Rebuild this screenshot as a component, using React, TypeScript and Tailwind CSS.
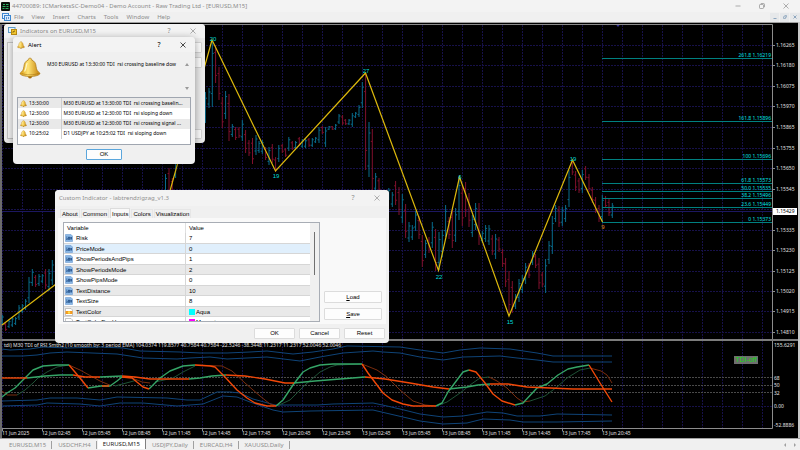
import type { ReactNode } from "react";
import clsx from "clsx";

type Bar = [number, number, number, 0 | 1];

// x, high, low, 1 = up bar
const bars: Bar[] = [
  [2.3, 315, 325, 1], [5.6, 323, 331, 0], [9, 320, 328, 1], [12.3, 317, 327, 1], [15.6, 317, 325, 1],
  [19, 305, 320, 1], [22.3, 304, 313, 1], [25.6, 299, 310, 1], [29, 277, 303, 1], [32.3, 269, 286, 1],
  [35.6, 275, 287, 0], [39, 274, 286, 1], [42.3, 274, 283, 1], [45.6, 269, 289, 0], [49, 269, 291, 1],
  [52.3, 260, 285, 1], [165.5, 174, 196, 1], [169, 168, 196, 0], [172.3, 178, 196, 0], [175.6, 163, 178, 1],
  [205.4, 92, 123, 1], [209, 88, 108, 1], [212.3, 40, 107, 1], [215.6, 45, 83, 0], [219, 67, 100, 0],
  [222.3, 97, 128, 0], [225.6, 91, 119, 1], [229, 94, 141, 0], [232.3, 124, 137, 1], [235.6, 127, 140, 0],
  [239, 127, 138, 0], [242.3, 120, 141, 1], [245.6, 130, 153, 0], [249, 140, 156, 0], [252.5, 138, 164, 0],
  [256, 135, 155, 1], [259, 141, 153, 1], [262.3, 140, 154, 1], [265.6, 147, 160, 0], [269, 147, 165, 1],
  [272.3, 144, 163, 0], [275.6, 157, 172, 0], [278.8, 145, 162, 1], [282.3, 144, 153, 0], [285.6, 148, 157, 0],
  [288.8, 137, 151, 1], [292.3, 141, 150, 0], [295.6, 141, 149, 1], [299.3, 137, 146, 0], [302.3, 139, 148, 1],
  [305.6, 139, 148, 1], [309, 138, 147, 0], [312.3, 138, 147, 1], [315.6, 137, 143, 1], [319, 127, 143, 1],
  [322.3, 126, 134, 0], [325.6, 127, 147, 1], [329, 126, 130, 1], [332.3, 126, 130, 0], [335.6, 124, 130, 1],
  [339, 114, 124, 1], [342.6, 115, 125, 0], [345.6, 119, 125, 0], [349, 119, 125, 1], [352.3, 113, 127, 1],
  [355.6, 112, 118, 1], [359, 105, 117, 1], [362.3, 82, 108, 1], [365.6, 72, 170, 0], [369, 122, 177, 1],
  [372.3, 129, 191, 0], [375.6, 173, 192, 1], [379, 178, 192, 0], [388.8, 188, 200, 1], [392.3, 192, 207, 1],
  [395.6, 181, 205, 0], [399, 187, 215, 0], [402.3, 194, 223, 1], [405.6, 204, 238, 0], [409, 222, 242, 1],
  [412.3, 225, 240, 1], [415.6, 211, 231, 1], [419, 216, 239, 0], [422.3, 235, 267, 0], [425.6, 240, 258, 1],
  [429, 237, 253, 0], [432.3, 222, 248, 1], [435.6, 229, 271, 0], [439, 232, 270, 1], [442.3, 230, 257, 1],
  [445.6, 205, 237, 1], [449, 217, 239, 0], [452.3, 210, 248, 0], [455.6, 208, 242, 1], [459, 177, 220, 1],
  [462.3, 185, 226, 0], [465.6, 182, 217, 0], [469, 193, 227, 0], [472.3, 215, 237, 1], [475.6, 203, 230, 1],
  [479, 203, 245, 0], [482.3, 231, 243, 1], [485.6, 225, 242, 1], [489, 225, 245, 1], [492.3, 235, 255, 0],
  [495.6, 234, 259, 1], [499, 237, 252, 0], [502.6, 249, 267, 0], [505.6, 258, 287, 0], [509, 271, 313, 0],
  [512.3, 281, 313, 0], [515.6, 294, 309, 1], [519, 279, 302, 1], [522.3, 275, 293, 1], [525.6, 263, 284, 1],
  [529, 263, 278, 0], [532.6, 251, 265, 1], [535.6, 254, 268, 0], [539, 258, 289, 0], [542.3, 272, 287, 0],
  [545.6, 259, 293, 1], [549, 241, 264, 1], [552.3, 216, 254, 1], [555.6, 205, 222, 1], [559, 206, 227, 0],
  [562.3, 207, 226, 1], [565.6, 205, 222, 1], [569, 170, 207, 1], [572.3, 160, 175, 0], [575.6, 171, 191, 0],
  [579, 178, 193, 0], [582.3, 170, 193, 1], [585.6, 166, 180, 0], [589, 174, 192, 0], [592.3, 187, 203, 0],
  [595.6, 197, 213, 0], [599, 205, 222, 0], [602.3, 195, 222, 1], [605.6, 196, 208, 0], [609, 199, 216, 0],
  [612.3, 203, 218, 1],
];

const zigzag = "2,325 130,228 158,234 212,40 275.5,171 365.5,73 438.5,270.5 459.5,177 509,316 572.5,160 602.5,222";

const pivots: [number, number, string][] = [
  [213, 41, "20"], [276, 178, "19"], [366, 73, "27"], [439, 279, "22"],
  [460, 179, "6"], [510, 324, "15"], [573, 161, "19"],
];

const prices: [number, string][] = [
  [45, "1.16265"], [65, "1.16180"], [86, "1.16075"], [106, "1.15970"], [127, "1.15865"],
  [148, "1.15755"], [168, "1.15650"], [189, "1.15545"], [209, ""], [230, "1.15335"],
  [250, "1.15230"], [271, "1.15125"], [291, "1.15020"], [311, "1.14915"], [332, "1.14810"],
];

const fibs: [number, string][] = [
  [58, "261.8 1.16219"], [121, "161.8 1.15896"], [159, "100 1.15696"], [183, "61.8 1.15573"],
  [191, "50.0 1.15535"], [198, "38.2 1.15496"], [207, "23.6 1.15449"], [222, "0 1.15373"],
];

const levels: [number, string][] = [
  [345, "155.6291"], [378, "68"], [385, "50"], [393, "32"], [406, "0.00"], [425, "-52.8886"],
];

const times = [
  "11 Jun 2025", "12 Jun 02:45", "12 Jun 05:45", "12 Jun 08:45", "12 Jun 11:45", "12 Jun 14:45",
  "12 Jun 17:45", "12 Jun 20:45", "12 Jun 23:45", "13 Jun 02:45", "13 Jun 05:45", "13 Jun 08:45",
  "13 Jun 11:45", "13 Jun 14:45", "13 Jun 17:45", "13 Jun 20:45",
];

const bands = [
  "2,349 10,350 30,349 43,347 67,348 100,347 123,348 140,351 180,352 200,353 227,353 250,352 267,351 293,354 313,352 333,349 347,346 400,347 420,350 443,353 460,350 480,348 510,349 537,353 553,356 612,356",
  "2,356 23,356 37,355 50,353 67,352 117,354 143,358 177,359 190,358 210,357 227,359 267,357 300,361 320,357 343,353 373,351 383,352 400,353 420,357 443,360 463,357 500,356 517,358 537,360 553,362 612,362",
  "2,401 37,400 50,398 77,398 100,400 117,397 167,398 187,400 200,400 217,392 230,392 240,393 253,399 275,405 317,405 333,404 373,403 387,406 400,409 420,414 443,417 463,416 487,412 503,413 517,416 540,416 557,414 612,415",
  "2,406 37,405 47,403 80,404 100,406 120,403 143,403 177,406 203,404 223,396 237,397 250,402 273,410 283,412 310,411 373,410 390,414 403,417 420,421 443,424 467,423 483,419 510,420 523,422 557,422 612,421",
];

const fastUp = [
  "2,397 7,393 15,388 25,378 33,370 43,366 57,365 69,365",
  "88,388 101,386 110,386 117,381 122,377",
  "149,389 160,378 170,371 183,366 195,365",
  "276,406 283,400 293,385 303,372 310,368 320,365 333,364 362,364",
  "436,406 442,403 448,392 457,380 463,372 469,370",
  "515,405 523,403 537,388 547,384 558,375 568,369 577,367 589,365",
  "27,378 45,376 60,375 73,375",
  "100,377 122,376",
  "189,379 200,378 212,376 226,375",
  "294,383 315,381 340,379 365,377",
  "449,389 467,387 478,385 490,384",
];

const fastDown = [
  "69,365 80,378 88,388",
  "102,386 109,386",
  "122,377 132,378 143,387 149,389",
  "195,365 210,366 215,367 225,377 237,390 247,398 255,403 267,406 276,406",
  "362,364 368,373 377,385 383,393 392,400 403,404 413,406 436,406",
  "469,370 476,372 485,383 493,394 502,401 515,405",
  "589,365 600,383 612,402",
  "2,378 27,378",
  "73,375 85,377 100,377",
  "122,376 135,377 150,379 189,379",
  "226,375 245,376 265,379 285,383 294,383",
  "365,377 385,379 410,383 433,387 449,389",
  "490,384 508,384 527,387 550,388 573,389 612,389",
];

const signalUp = [
  "17,395 25,390 33,383 38,378 47,372 57,367 69,365",
  "115,386 130,382 137,380",
  "155,382 173,378 183,372 195,366",
  "277,406 290,400 305,385 320,372 330,367 337,365 362,364",
  "436,406 447,402 460,393 470,385 480,378 489,377",
  "530,401 545,396 557,387 567,378 580,370 590,368",
];

const signalDown = [
  "2,391 7,395 17,395",
  "69,365 80,370 100,381 112,386",
  "132,378 142,382 150,383",
  "195,365 222,366 232,371 245,383 260,396 270,404 277,406",
  "362,364 377,370 387,377 400,390 413,401 425,405 436,406",
  "489,377 497,381 507,388 517,398 523,402 530,401",
  "590,368 601,371 607,375 612,383",
];

const alerts = [
  ["13:30:00", "M30 EURUSD at 13:30:00 TDI  rsi crossing baselin..."],
  ["12:30:00", "M30 EURUSD at 12:30:00 TDI  rsi sloping down"],
  ["12:30:00", "M30 EURUSD at 12:30:00 TDI  rsi crossing signal ..."],
  ["10:25:02", "D1 USDJPY at 10:25:02 TDI  rsi sloping down"],
];

const inputs = [
  ["Risk", "7"],
  ["PriceMode", "0"],
  ["ShowPeriodsAndPips", "1"],
  ["ShowPeriodsMode", "2"],
  ["ShowPipsMode", "0"],
  ["TextDistance", "10"],
  ["TextSize", "8"],
  ["TextColor", "Aqua"],
  ["TextColorDevUp", "Magenta"],
];

const swatches: Record<string, string> = { Aqua: "bg-[#00ffff]", Magenta: "bg-[#ff00ff]" };

function Bell({ className }: { className?: string }) {
  return (
    <svg viewBox="0 0 22 22" className={className} aria-hidden="true">
      <defs>
        <linearGradient id="bell" x1="0" x2="1">
          <stop offset="0" stopColor="#d99a12" />
          <stop offset="0.4" stopColor="#ffe475" />
          <stop offset="1" stopColor="#c47f08" />
        </linearGradient>
      </defs>
      <circle cx="11" cy="19.5" r="2" fill="#a86c08" />
      <path
        d="M11 1.2c-1.3 0-1.9.8-1.7 1.9C6.4 4 5.200 6.500 4.900 9.500 4.600 13 3.200 14.500 1 16.300c0 1.900 5 3.200 10 3.200s10-1.300 10-3.200c-2.200-1.800-3.600-3.300-3.900-6.800-.3-3-1.500-5.500-4.400-6.400.2-1.100-.4-1.900-1.700-1.900z"
        fill="url(#bell)"
        stroke="#a87412"
        strokeWidth="0.7"
      />
      <path d="M2.500 16.300c4 2 13 2 17 0" fill="none" stroke="#a87412" strokeWidth="0.6" />
      <path d="M8 6.500c-1 2-.7 5-2.200 7.500" fill="none" stroke="#fff6c4" strokeWidth="1.300" strokeLinecap="round" />
    </svg>
  );
}

function CloseIcon() {
  return (
    <svg viewBox="0 0 6 6" className="size-[6px]" stroke="currentColor" strokeWidth="0.7" aria-hidden="true">
      <path d="M0.500 0.500l5 5M5.500 0.500l-5 5" />
    </svg>
  );
}

function WindowTitle({ icon, title, className }: { icon?: ReactNode; title: string; className?: string }) {
  return (
    <header className={clsx("flex items-center gap-[3px] rounded-t-[4px] bg-[#f3f3f3] pr-[9px] pl-[4px]", className)}>
      {icon}
      <h2 className="flex-1 whitespace-nowrap">{title}</h2>
      <button className="w-[6px] text-center text-[7px]" aria-label="Help">?</button>
      <button className="ml-[15px]" aria-label="Close">
        <CloseIcon />
      </button>
    </header>
  );
}

function DialogButton({ children, className }: { children: ReactNode; className?: string }) {
  return (
    <button className={clsx("rounded-[1px] border bg-[#fdfdfd] font-['Liberation_Sans',sans-serif] text-[6px] leading-[9px]", className)}>
      {children}
    </button>
  );
}

function InputIcon({ color }: { color?: boolean }) {
  return (
    <svg viewBox="0 0 8 8" className="size-[8px]" aria-hidden="true">
      <path d="M0.500 0.500h5.500l1.500 1.500v5.500h-7z" fill={color ? "#fff" : "#8ab8e6"} stroke={color ? "#a0a0a0" : "#6d9bd0"} strokeWidth="0.6" />
      {color ? (
        <>
          <rect x="0.500" y="3" width="7" height="3" fill="#f39a1e" />
          <circle cx="4" cy="4.500" r="1.200" fill="#ffe14d" />
        </>
      ) : (
        <path d="M1.300 3h1M1.300 5.500h1V4.200h-1M3.500 3v2.500h1V3h-1M5.700 3v2.500M6.500 3v2.500" fill="none" stroke="#123f78" strokeWidth="0.7" />
      )}
    </svg>
  );
}

function Lines({ items, stroke, width = 1 }: { items: string[]; stroke: string; width?: number }) {
  return (
    <g fill="none" stroke={stroke} strokeWidth={width} strokeLinejoin="round">
      {items.map((points) => (
        <polyline key={points} points={points} />
      ))}
    </g>
  );
}

function Chart() {
  return (
    <svg viewBox="0 22 800 417" className="h-full w-full font-['Noto_Sans',sans-serif] text-[5px]">
      <rect y="22" width="800" height="417" fill="#000" />
      <rect y="22" width="800" height="1" fill="#a0a0a0" />
      <rect y="24" width="2" height="415" fill="#6b6b6b" />
      <rect x="798" y="22" width="2" height="417" fill="#c8c8c8" />
      <rect y="438" width="800" height="1" fill="#a0a0a0" />

      {/* grid */}
      <g stroke="#17114a" strokeDasharray="2 1">
        {Array.from({ length: 39 }, (_, i) => (
          <line key={i} x1={2.5 + i * 20} x2={2.5 + i * 20} y1="25" y2="428" />
        ))}
        {prices.map(([y]) => (
          <line key={y} x1="2" x2="772" y1={y + 0.5} y2={y + 0.5} />
        ))}
        <line x1="2" x2="772" y1="406.5" y2="406.5" />
      </g>
      <line x1="2" x2="772" y1="211.5" y2="211.5" stroke="#1c1760" />
      <path d="M616 24.500h4l-2 2.500z" fill="#3a36a0" />

      {/* price bars */}
      {bars.map(([x, high, low, up]) => {
        const step = (low - high) / 5;
        const open = up ? low - step : high + step;
        const close = up ? high + step : low - step;
        return (
          <path
            key={x}
            d={`M${x} ${high}V${low}M${x - 1.5} ${open}H${x}M${x} ${close}H${x + 1.5}`}
            stroke={up ? "#086c8c" : "#80102c"}
            strokeWidth="1"
          />
        );
      })}

      {/* fibonacci levels */}
      {fibs.map(([y, label]) => (
        <g key={label}>
          <line x1="602" x2="772" y1={y + 0.5} y2={y + 0.5} stroke="#008080" />
          <text x="771" y={y - 1} textAnchor="end" fill="#00e0e0">{label}</text>
        </g>
      ))}

      <polyline points={zigzag} fill="none" stroke="#dcb80c" strokeWidth="1.200" />
      <g className="font-['Liberation_Sans',sans-serif] text-[6px]" textAnchor="middle">
        {pivots.map(([x, y, label]) => (
          <text key={x} x={x} y={y} fill="#00dcdc">{label}</text>
        ))}
        <text x="603" y="229" fill="#e08a18">9</text>
      </g>

      {/* axes */}
      <path d="M2 24.500H772.500V428.500H2" fill="none" stroke="#8c8c8c" />
      <rect x="2" y="339" width="796" height="2" fill="#7c7c7c" />
      <g fill="#e0e0e0">
        {prices.map(([y, label]) => (
          <g key={y}>
            <rect x="773" y={y} width="2" height="1" fill="#8c8c8c" />
            {label && <text x="776" y={y + 2}>{label}</text>}
          </g>
        ))}
        {levels.map(([y, label]) => (
          <text key={label} x="774" y={y + 2}>{label}</text>
        ))}
        {times.map((label, i) => (
          <g key={label}>
            <rect x={2 + i * 40} y="428" width="1" height="3" fill="#8c8c8c" />
            <text x={2 + i * 40} y="435">{label}</text>
          </g>
        ))}
        <text x="4" y="347">
          tdi) M30 TDI of RSI Smth2 (10 smooth by: 3 period EMA) 104.0374 119.8577 40.7584 40.7584 -22.5246 -38.3448 11.2317 11.2317 52.0046 52.0046
        </text>
      </g>
      <rect x="773" y="208" width="24" height="7" fill="#fff" />
      <text x="776" y="213" fill="#000">1.15429</text>

      {/* oscillator */}
      <g stroke="#4a4a4a" strokeDasharray="2 1">
        <line x1="2" x2="772" y1="377.500" y2="377.500" />
        <line x1="2" x2="772" y1="385.500" y2="385.500" />
        <line x1="2" x2="772" y1="392.500" y2="392.500" />
      </g>
      <Lines items={bands} stroke="#0f4478" />
      <Lines items={signalUp} stroke="#1f5236" />
      <Lines items={signalDown} stroke="#7a2c0e" />
      <Lines items={fastUp} stroke="#35a567" width={1.4} />
      <Lines items={fastDown} stroke="#f24808" width={1.4} />
    </svg>
  );
}

function IndicatorsDialog() {
  return (
    <section className="absolute top-[24px] left-[4px] flex h-[119px] w-[201px] flex-col rounded-[4px] bg-[#ebebeb] text-[#8c8c8c]">
      <WindowTitle
        className="h-[14px]"
        title="Indicators on EURUSD,M15"
        icon={
          <svg viewBox="0 0 9 8" className="h-[8px] w-[9px]" aria-hidden="true">
            <rect x="0.500" y="0.500" width="6.500" height="5" fill="#e8f3fb" stroke="#5d9cc9" />
            <rect x="3.500" y="2.500" width="5" height="5" fill="#f4c931" stroke="#b98b14" />
            <path d="M5 6V4.500h1.500V3.500" stroke="#7a5a08" strokeWidth="0.7" fill="none" />
          </svg>
        }
      />
      <div className="flex flex-1 justify-between pt-[4px] pr-[3px] pb-[4px] pl-[3px]">
        <div className="w-[176px] border border-[#c4c4c4] bg-[#f6f6f6]" />
        <div className="flex flex-col gap-[4px]">
          <DialogButton className="h-[11px] w-[16px] border-[#d4d4d4]">{null}</DialogButton>
          <DialogButton className="h-[11px] w-[16px] border-[#d4d4d4]">{null}</DialogButton>
          <DialogButton className="mt-auto h-[10px] w-[16px] border-[#d4d4d4]">{null}</DialogButton>
        </div>
      </div>
    </section>
  );
}

function AlertDialog() {
  return (
    <section className="absolute top-[37px] left-[13px] flex h-[127px] w-[182px] flex-col rounded-[4px] bg-[#f0f0f0] text-black shadow-[0_2px_8px_rgba(0,0,0,0.4)]">
      <WindowTitle className="h-[15px]" title="Alert" icon={<Bell className="size-[8px]" />} />
      <div className="flex h-[45px] pt-[5px] pr-[4px] pl-[6px]">
        <Bell className="size-[22px]" />
        <p className="ml-[6px] flex-1 pt-[4px] text-[5px] leading-[7px] whitespace-pre">
          M30 EURUSD at 13:30:00 TDI  rsi crossing baseline dow
        </p>
        <div className="flex w-[8px] flex-col items-center justify-between pt-[6px] pb-[7px]">
          <svg viewBox="0 0 4 3" className="h-[3px] w-[4px]" fill="#9a9a9a"><path d="M0 3h4L2 0z" /></svg>
          <svg viewBox="0 0 4 3" className="h-[3px] w-[4px]" fill="#9a9a9a"><path d="M0 0h4L2 3z" /></svg>
        </div>
      </div>
      <div className="mx-[4px] h-[48px] border border-[#a0a6b0] bg-white">
        <table className="h-[41px] w-full border-collapse text-[5px] leading-[7px]">
          <tbody>
            {alerts.map(([time, text], i) => (
              <tr key={text} className={i % 2 ? "bg-white" : "bg-[#e9e9e9]"}>
                <td className="w-[43px] border-r border-[#cfcfcf] p-0">
                  <div className="flex items-center gap-[2px] pl-[2px]">
                    <Bell className="size-[7px]" />
                    {time}
                  </div>
                </td>
                <td className="p-0 pl-[2px] whitespace-pre">{text}</td>
              </tr>
            ))}
          </tbody>
        </table>
      </div>
      <DialogButton className="mx-auto mt-[4px] h-[11px] w-[36px] border-[#5ba6dc]">OK</DialogButton>
    </section>
  );
}

function CustomIndicatorDialog() {
  return (
    <section className="absolute top-[190px] left-[55px] flex h-[153px] w-[334px] flex-col rounded-[4px] bg-[#f0f0f0] text-black">
      <WindowTitle className="h-[16px] text-[#909090]" title="Custom Indicator - labtrendzigzag_v1.3" />
      <nav className="mt-[2px] flex h-[10px] items-end gap-[1px] px-[5px] font-['Liberation_Sans',sans-serif] text-[6px] leading-[8px]">
        {["About", "Common", "Inputs", "Colors", "Visualization"].map((tab) => (
          <button
            key={tab}
            className={clsx(
              "border-x border-t px-[1px]",
              tab === "Inputs" ? "h-[10px] border-[#dcdcdc] bg-[#f9f9f9]" : "h-[9px] border-[#e6e6e6]",
            )}
          >
            {tab}
          </button>
        ))}
      </nav>
      <div className="mx-[3px] flex h-[106px] justify-between bg-[#f9f9f9] pt-[4px] pr-[4px] pl-[5px]">
        <div className="flex h-[100px] w-[257px] overflow-hidden border border-[#a8adb5] bg-white">
          <div className="flex-1">
            <table className="w-full border-separate border-spacing-0 font-['Liberation_Sans',sans-serif] text-[6px] leading-[8px]">
              <thead>
                <tr className="h-[10px] text-left">
                  <th className="w-[122px] border-r border-[#e0e0e0] p-0 pl-[3px] font-normal">Variable</th>
                  <th className="p-0 pl-[3px] font-normal">Value</th>
                </tr>
              </thead>
              <tbody>
                {inputs.map(([name, value], i) => {
                  const cell = i % 2 ? "border-y border-[#d6d6d6]" : "border-[#d6d6d6]";
                  return (
                    <tr
                      key={name}
                      className={clsx(i % 2 ? "h-[11px]" : "h-[10px]", i === 1 ? "bg-[#e0effc]" : i % 2 ? "bg-[#e9e9e9]" : "bg-white")}
                    >
                      <td className={clsx("border-r p-0 pl-[1px]", cell)}>
                        <div className="flex items-center gap-[3px]">
                          <InputIcon color={value in swatches} />
                          {name}
                        </div>
                      </td>
                      <td className={clsx("p-0 pl-[3px]", cell)}>
                        <div className="flex items-center gap-[1px]">
                          {value in swatches && <span className={clsx("h-[6px] w-[6px]", swatches[value])} />}
                          {value}
                        </div>
                      </td>
                    </tr>
                  );
                })}
              </tbody>
            </table>
          </div>
          <div className="flex w-[9px] justify-center bg-[#f0f0f0] pt-[9px]">
            <div className="h-[43px] w-[1px] bg-[#707070]" />
          </div>
        </div>
        <div className="flex flex-col justify-end gap-[5px] pb-[4px]">
          <DialogButton className="h-[12px] w-[58px] border-[#dcdcdc]"><u>L</u>oad</DialogButton>
          <DialogButton className="h-[12px] w-[58px] border-[#dcdcdc]"><u>S</u>ave</DialogButton>
        </div>
      </div>
      <footer className="flex justify-end gap-[4px] pt-[4px] pr-[4px]">
        <DialogButton className="h-[11px] w-[41px] border-[#dcdcdc]">OK</DialogButton>
        <DialogButton className="h-[11px] w-[41px] border-[#dcdcdc]">Cancel</DialogButton>
        <DialogButton className="h-[11px] w-[41px] border-[#dcdcdc]">Reset</DialogButton>
      </footer>
    </section>
  );
}

export default function App() {
  return (
    <main className="relative flex h-screen flex-col overflow-hidden bg-black font-['Noto_Sans',sans-serif] text-[6px] leading-[8px]">
      <header className="flex h-[12px] items-center bg-[#f3f3f3] pr-[11px] pl-[1px] text-[#8c8c8c]">
        <svg viewBox="0 0 9 9" className="size-[9px]" aria-hidden="true">
          <rect width="9" height="9" rx="1" fill="#0b0f0b" />
          <path d="M2 2.500h2M5 2.500h2.500M1.500 4.500h3M5.500 4.500h2M1.500 6.500h2M4.500 6.500h3" stroke="#2fc36a" strokeWidth="0.900" />
        </svg>
        <h1 className="ml-[2px] flex-1 whitespace-nowrap">
          44700089: ICMarketsSC-Demo04 - Demo Account - Raw Trading Ltd - [EURUSD,M15]
        </h1>
        <div className="flex items-center gap-[18px]">
          <button aria-label="Minimize">
            <svg viewBox="0 0 6 6" className="size-[6px]" stroke="currentColor" strokeWidth="0.7"><path d="M0.500 3h5" /></svg>
          </button>
          <button aria-label="Restore">
            <svg viewBox="0 0 6 6" className="size-[6px]" fill="none" stroke="currentColor" strokeWidth="0.7">
              <rect x="0.500" y="1.500" width="4" height="4" rx="0.700" />
              <path d="M1.800 0.500h2.700a1 1 0 0 1 1 1v2.700" />
            </svg>
          </button>
          <button aria-label="Close"><CloseIcon /></button>
        </div>
      </header>

      <nav className="flex h-[10px] items-center bg-[#f0f0f0] pl-[2px] text-[#8c8c8c]">
        <svg viewBox="0 0 9 8" className="h-[8px] w-[9px]" aria-hidden="true">
          <rect x="0.500" y="0.500" width="6" height="5" fill="#eaf4ff" stroke="#3c86d0" />
          <rect x="2.500" y="2.500" width="6" height="5" fill="#d6e9fb" stroke="#3c86d0" />
          <path d="M4.500 4v2.500M6.500 4v2" stroke="#2a6bb8" strokeWidth="0.700" />
        </svg>
        <div className="ml-[3px] flex flex-1 gap-[8px]">
          {["File", "View", "Insert", "Charts", "Tools", "Window", "Help"].map((item) => (
            <button key={item}>{item}</button>
          ))}
        </div>
        <div className="flex gap-[1px] text-[#8ea6be]">
          <button className="flex h-[9px] w-[9px] items-center justify-center bg-[#e6e8ea]" aria-label="Minimize chart">
            <svg viewBox="0 0 4 4" className="size-[4px]" stroke="currentColor"><path d="M0.500 3.500h3" /></svg>
          </button>
          <button className="flex h-[9px] w-[9px] items-center justify-center bg-[#e6e8ea]" aria-label="Restore chart">
            <svg viewBox="0 0 4 4" className="size-[4px]" fill="none" stroke="currentColor" strokeWidth="0.800">
              <path d="M0.500 1.700h2v1.800h-2zM1.500 0.500h2v2" />
            </svg>
          </button>
          <button className="flex h-[9px] w-[10px] items-center justify-center bg-[#e6e8ea]" aria-label="Close chart">
            <svg viewBox="0 0 4 4" className="size-[4px]" stroke="currentColor"><path d="M0.500 0.500l3 3M3.500 0.500l-3 3" /></svg>
          </button>
        </div>
      </nav>

      <div className="min-h-0 flex-1">
        <Chart />
      </div>
      <button className="absolute top-[356px] right-[42px] h-[8px] w-[24px] bg-[#6e6e6e] font-['Liberation_Sans',sans-serif] text-[7px] leading-[8px] text-[#10d810]">
        TDI-off
      </button>

      <footer className="flex h-[11px] items-center gap-[1px] bg-[#f0f0f0] pr-[4px] pl-[4px] text-[#8c8c8c]">
        {["EURUSD,M15", "USDCHF,H4", "EURUSD,M15", "USDJPY,Daily", "EURCAD,H4", "XAUUSD,Daily"].map((tab, i) => (
          <button
            key={i}
            className={clsx(
              "border-r px-[5px]",
              i === 2 ? "h-[10px] self-start border-[#808080] bg-white text-[#202020]" : "h-[8px] border-[#a0a0a0]",
            )}
          >
            {tab}
          </button>
        ))}
        <div className="ml-auto flex gap-[8px]">
          <svg viewBox="0 0 2 4" className="h-[4px] w-[2px]" fill="#a0a0a0"><path d="M2 0v4L0 2z" /></svg>
          <svg viewBox="0 0 2 4" className="h-[4px] w-[2px]" fill="#a0a0a0"><path d="M0 0v4l2-2z" /></svg>
        </div>
      </footer>

      <IndicatorsDialog />
      <AlertDialog />
      <CustomIndicatorDialog />
    </main>
  );
}
